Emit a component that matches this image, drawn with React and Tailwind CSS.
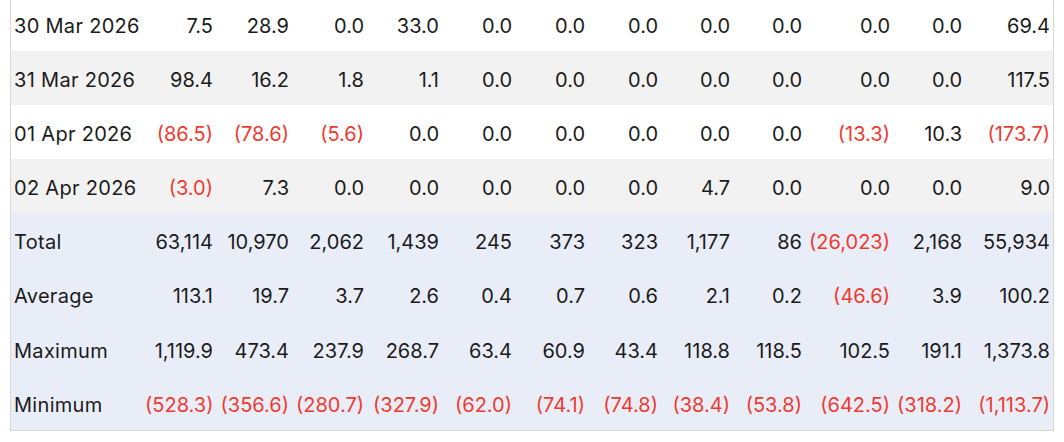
import React from "react";

const rows = [
  ["30 Mar 2026", "7.5", "28.9", "0.0", "33.0", "0.0", "0.0", "0.0", "0.0", "0.0", "0.0", "0.0", "69.4"],
  ["31 Mar 2026", "98.4", "16.2", "1.8", "1.1", "0.0", "0.0", "0.0", "0.0", "0.0", "0.0", "0.0", "117.5"],
  ["01 Apr 2026", "(86.5)", "(78.6)", "(5.6)", "0.0", "0.0", "0.0", "0.0", "0.0", "0.0", "(13.3)", "10.3", "(173.7)"],
  ["02 Apr 2026", "(3.0)", "7.3", "0.0", "0.0", "0.0", "0.0", "0.0", "4.7", "0.0", "0.0", "0.0", "9.0"],
];

const summary = [
  ["Total", "63,114", "10,970", "2,062", "1,439", "245", "373", "323", "1,177", "86", "(26,023)", "2,168", "55,934"],
  ["Average", "113.1", "19.7", "3.7", "2.6", "0.4", "0.7", "0.6", "2.1", "0.2", "(46.6)", "3.9", "100.2"],
  ["Maximum", "1,119.9", "473.4", "237.9", "268.7", "63.4", "60.9", "43.4", "118.8", "118.5", "102.5", "191.1", "1,373.8"],
  ["Minimum", "(528.3)", "(356.6)", "(280.7)", "(327.9)", "(62.0)", "(74.1)", "(74.8)", "(38.4)", "(53.8)", "(642.5)", "(318.2)", "(1,113.7)"],
];

const grid =
  "grid grid-cols-[134px_71px_76px_75px_75px_73px_73px_73px_72px_72px_88px_72px_88px] items-center";

function Row({ cells, bg, h }) {
  return (
    <div className={`${grid} ${bg} ${h}`}>
      {cells.map((c, i) => {
        const neg = c.startsWith("(");
        return (
          <div
            key={i}
            className={`pt-[4px] ${i === 0 ? "pl-[3px] text-left tracking-[0.3px]" : "pr-[3px] text-right"} whitespace-nowrap ${
              neg ? "text-[#ee3b30]" : "text-[#1b1b1b]"
            }`}
          >
            {c}
          </div>
        );
      })}
    </div>
  );
}

export default function App() {
  return (
    <div className="w-[1064px] h-[442px] overflow-hidden bg-white font-['Inter',sans-serif] text-[20px] font-normal">
      <div className="ml-[10px] -mt-[3px] w-[1044px] border-l border-r border-b border-[#d8d8d0]">
        {rows.map((r, i) => (
          <Row key={i} cells={r} bg={i % 2 === 0 ? "bg-white" : "bg-[#f2f2f2]"} h="h-[54px]" />
        ))}
        {summary.map((r, i) => (
          <Row key={i} cells={r} bg="bg-[#e9edf8]" h="h-[54.25px]" />
        ))}
      </div>
    </div>
  );
}
